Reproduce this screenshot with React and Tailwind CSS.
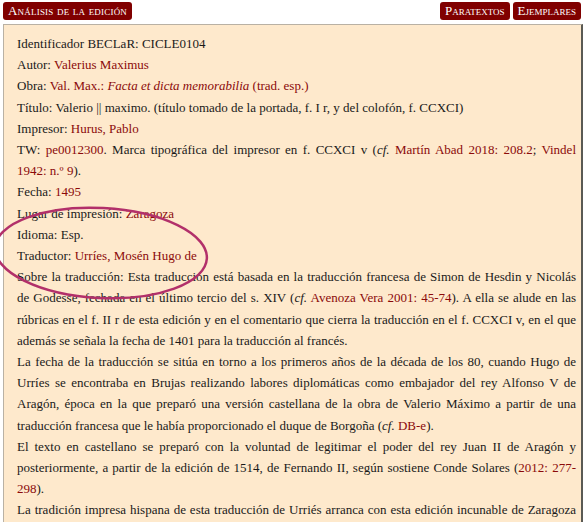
import React from "react";

const L = ({ children }) => <span className="text-[#8b0a0a]">{children}</span>;

export default function App() {
  return (
    <div className="relative w-[588px] h-[522px] overflow-hidden bg-white" style={{ fontFamily: '"Liberation Serif", serif' }}>
      <div className="flex items-start justify-between pl-[3px] pr-[7px] pt-[2px]">
        <div className="bg-[#800000] text-white rounded-[3px] h-[18px] px-[5px] flex items-center text-[13px] [font-variant:small-caps] tracking-[0.2px]">Análisis de la edición</div>
        <div className="flex gap-[3px]">
          <div className="bg-[#800000] text-white rounded-[3px] h-[18px] px-[5px] flex items-center text-[13px] [font-variant:small-caps]">Paratextos</div>
          <div className="bg-[#800000] text-white rounded-[3px] h-[18px] px-[5px] flex items-center text-[13px] [font-variant:small-caps]">Ejemplares</div>
        </div>
      </div>
      <div className="mt-[4px] ml-[3px] w-[580px] bg-[#fee9cc] border-t border-l border-[#b9b1a4] border-r-2 border-r-[#5a5a54] pl-[13px] pr-[5px] pt-[8px] pb-4 text-[13px] leading-[21.2px] text-[#1a1a1a]">
        <p>Identificador BECLaR: CICLE0104</p>
        <p>Autor: <L>Valerius Maximus</L></p>
        <p>Obra: <L>Val. Max.: <i>Facta et dicta memorabilia</i> (trad. esp.)</L></p>
        <p>Título: Valerio || maximo. (título tomado de la portada, f. I r, y del colofón, f. CCXCI)</p>
        <p>Impresor: <L>Hurus, Pablo</L></p>
        <p className="text-justify">TW: <L>pe0012300</L>. Marca tipográfica del impresor en f. CCXCI v (<i>cf.</i> <L>Martín Abad 2018: 208.2</L>; <L>Vindel 1942: n.º 9</L>).</p>
        <p>Fecha: <L>1495</L></p>
        <p>Lugar de impresión: <L>Zaragoza</L></p>
        <p>Idioma: Esp.</p>
        <p>Traductor: <L>Urríes, Mosén Hugo de</L></p>
        <p className="text-justify">Sobre la traducción: Esta traducción está basada en la traducción francesa de Simon de Hesdin y Nicolás de Godesse, fechada en el último tercio del s. XIV (<i>cf.</i> <L>Avenoza Vera 2001: 45-74</L>). A ella se alude en las rúbricas en el f. II r de esta edición y en el comentario que cierra la traducción en el f. CCXCI v, en el que además se señala la fecha de 1401 para la traducción al francés.</p>
        <p className="text-justify">La fecha de la traducción se sitúa en torno a los primeros años de la década de los 80, cuando Hugo de Urríes se encontraba en Brujas realizando labores diplomáticas como embajador del rey Alfonso V de Aragón, época en la que preparó una versión castellana de la obra de Valerio Máximo a partir de una traducción francesa que le había proporcionado el duque de Borgoña (<i>cf.</i> <L>DB-e</L>).</p>
        <p className="text-justify">El texto en castellano se preparó con la voluntad de legitimar el poder del rey Juan II de Aragón y posteriormente, a partir de la edición de 1514, de Fernando II, según sostiene Conde Solares (<L>2012: 277-298</L>).</p>
        <p className="text-justify">La tradición impresa hispana de esta traducción de Urriés arranca con esta edición incunable de Zaragoza y{"\u00a0"}continúa con las ediciones posteriores.</p>
      </div>
      <svg className="absolute left-0 top-0 pointer-events-none" width="588" height="522">
        <ellipse cx="101" cy="253" rx="106" ry="45" transform="rotate(3 101 253)" fill="none" stroke="#b2306a" strokeWidth="2.5" />
      </svg>
    </div>
  );
}
